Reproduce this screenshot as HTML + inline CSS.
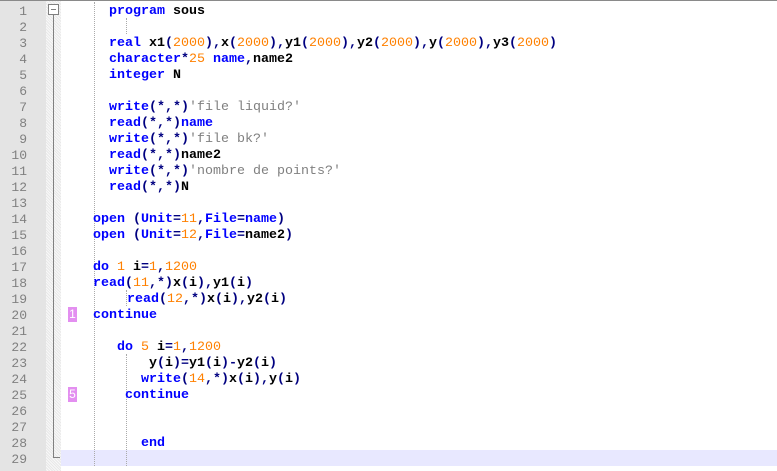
<!DOCTYPE html>
<html><head><meta charset="utf-8"><style>
html,body{margin:0;padding:0;width:777px;height:471px;overflow:hidden;background:#fff;position:relative;font-family:"Liberation Mono",monospace}
#top{position:absolute;left:0;top:0;width:777px;height:1px;background:#8a8a8a}
#gut{position:absolute;left:0;top:1px;width:46px;height:470px;background:#e4e4e4}
#fold{position:absolute;left:46px;top:1px;width:15px;height:470px;background-color:#f8f8f8;background-image:repeating-linear-gradient(45deg,#e8e8e8 0 1px,transparent 1px 2px)}
.ln{position:absolute;left:0;width:27px;text-align:right;font-size:13px;color:#808080;height:16px;line-height:16px}
.c{position:absolute;font-size:13.33px;height:16px;line-height:16px;white-space:pre;font-weight:bold;color:#000}
.k{color:#0000ff}.n{color:#ff8000;font-weight:normal}.o{color:#000080}.s{color:#808080;font-weight:normal}
#cur{position:absolute;left:61px;top:450px;width:716px;height:16px;background:#e8e8ff}
.g{position:absolute;width:0;border-left:1px dotted #aaa}
.m{position:absolute;left:68px;width:9px;height:15px;background:#e38ff0;color:#fff;font-size:12px;line-height:15px;text-align:center;font-family:"Liberation Sans",sans-serif}
#t{position:absolute;left:0;top:2px;width:777px;height:469px}
</style></head><body>
<div id="top"></div>
<div id="gut"></div>
<div id="fold"></div>
<div id="cur"></div>
<div style="position:absolute;left:48px;top:4px;width:9px;height:9px;border:1px solid #808080;background:#fff"></div>
<div style="position:absolute;left:51px;top:9px;width:5px;height:1px;background:#808080"></div>
<div style="position:absolute;left:53px;top:15px;width:1px;height:442px;background:#808080"></div>
<div style="position:absolute;left:53px;top:457px;width:7px;height:1px;background:#808080"></div>
<div class="g" style="left:94px;top:2px;height:464px"></div>
<div class="g" style="left:126px;top:18px;height:16px"></div>
<div class="g" style="left:126px;top:290px;height:16px"></div>
<div class="g" style="left:126px;top:354px;height:112px"></div>
<div class="m" style="top:307px">1</div>
<div class="m" style="top:387px">5</div>
<div id="t">
<div class="ln" style="top:2px">1</div><div class="ln" style="top:18px">2</div><div class="ln" style="top:34px">3</div><div class="ln" style="top:50px">4</div><div class="ln" style="top:66px">5</div><div class="ln" style="top:82px">6</div><div class="ln" style="top:98px">7</div><div class="ln" style="top:114px">8</div><div class="ln" style="top:130px">9</div><div class="ln" style="top:146px">10</div><div class="ln" style="top:162px">11</div><div class="ln" style="top:178px">12</div><div class="ln" style="top:194px">13</div><div class="ln" style="top:210px">14</div><div class="ln" style="top:226px">15</div><div class="ln" style="top:242px">16</div><div class="ln" style="top:258px">17</div><div class="ln" style="top:274px">18</div><div class="ln" style="top:290px">19</div><div class="ln" style="top:306px">20</div><div class="ln" style="top:322px">21</div><div class="ln" style="top:338px">22</div><div class="ln" style="top:354px">23</div><div class="ln" style="top:370px">24</div><div class="ln" style="top:386px">25</div><div class="ln" style="top:402px">26</div><div class="ln" style="top:418px">27</div><div class="ln" style="top:434px">28</div><div class="ln" style="top:450px">29</div>
<div class="c" style="left:109px;top:2px"><span class="k">program</span> sous</div>
<div class="c" style="left:109px;top:34px"><span class="k">real</span> x1<span class="o">(</span><span class="n">2000</span><span class="o">),</span>x<span class="o">(</span><span class="n">2000</span><span class="o">),</span>y1<span class="o">(</span><span class="n">2000</span><span class="o">),</span>y2<span class="o">(</span><span class="n">2000</span><span class="o">),</span>y<span class="o">(</span><span class="n">2000</span><span class="o">),</span>y3<span class="o">(</span><span class="n">2000</span><span class="o">)</span></div>
<div class="c" style="left:109px;top:50px"><span class="k">character</span><span class="o">*</span><span class="n">25</span> <span class="k">name</span><span class="o">,</span>name2</div>
<div class="c" style="left:109px;top:66px"><span class="k">integer</span> N</div>
<div class="c" style="left:109px;top:98px"><span class="k">write</span><span class="o">(*,*)</span><span class="s">'file liquid?'</span></div>
<div class="c" style="left:109px;top:114px"><span class="k">read</span><span class="o">(*,*)</span><span class="k">name</span></div>
<div class="c" style="left:109px;top:130px"><span class="k">write</span><span class="o">(*,*)</span><span class="s">'file bk?'</span></div>
<div class="c" style="left:109px;top:146px"><span class="k">read</span><span class="o">(*,*)</span>name2</div>
<div class="c" style="left:109px;top:162px"><span class="k">write</span><span class="o">(*,*)</span><span class="s">'nombre de points?'</span></div>
<div class="c" style="left:109px;top:178px"><span class="k">read</span><span class="o">(*,*)</span>N</div>
<div class="c" style="left:93px;top:210px"><span class="k">open</span> <span class="o">(</span><span class="k">Unit</span><span class="o">=</span><span class="n">11</span><span class="o">,</span><span class="k">File</span><span class="o">=</span><span class="k">name</span><span class="o">)</span></div>
<div class="c" style="left:93px;top:226px"><span class="k">open</span> <span class="o">(</span><span class="k">Unit</span><span class="o">=</span><span class="n">12</span><span class="o">,</span><span class="k">File</span><span class="o">=</span>name2<span class="o">)</span></div>
<div class="c" style="left:93px;top:258px"><span class="k">do</span> <span class="n">1</span> i<span class="o">=</span><span class="n">1</span><span class="o">,</span><span class="n">1200</span></div>
<div class="c" style="left:93px;top:274px"><span class="k">read</span><span class="o">(</span><span class="n">11</span><span class="o">,*)</span>x<span class="o">(</span>i<span class="o">),</span>y1<span class="o">(</span>i<span class="o">)</span></div>
<div class="c" style="left:127px;top:290px"><span class="k">read</span><span class="o">(</span><span class="n">12</span><span class="o">,*)</span>x<span class="o">(</span>i<span class="o">),</span>y2<span class="o">(</span>i<span class="o">)</span></div>
<div class="c" style="left:93px;top:306px"><span class="k">continue</span></div>
<div class="c" style="left:117px;top:338px"><span class="k">do</span> <span class="n">5</span> i<span class="o">=</span><span class="n">1</span><span class="o">,</span><span class="n">1200</span></div>
<div class="c" style="left:149px;top:354px">y<span class="o">(</span>i<span class="o">)=</span>y1<span class="o">(</span>i<span class="o">)-</span>y2<span class="o">(</span>i<span class="o">)</span></div>
<div class="c" style="left:141px;top:370px"><span class="k">write</span><span class="o">(</span><span class="n">14</span><span class="o">,*)</span>x<span class="o">(</span>i<span class="o">),</span>y<span class="o">(</span>i<span class="o">)</span></div>
<div class="c" style="left:125px;top:386px"><span class="k">continue</span></div>
<div class="c" style="left:141px;top:434px"><span class="k">end</span></div>
</div>
</body></html>
